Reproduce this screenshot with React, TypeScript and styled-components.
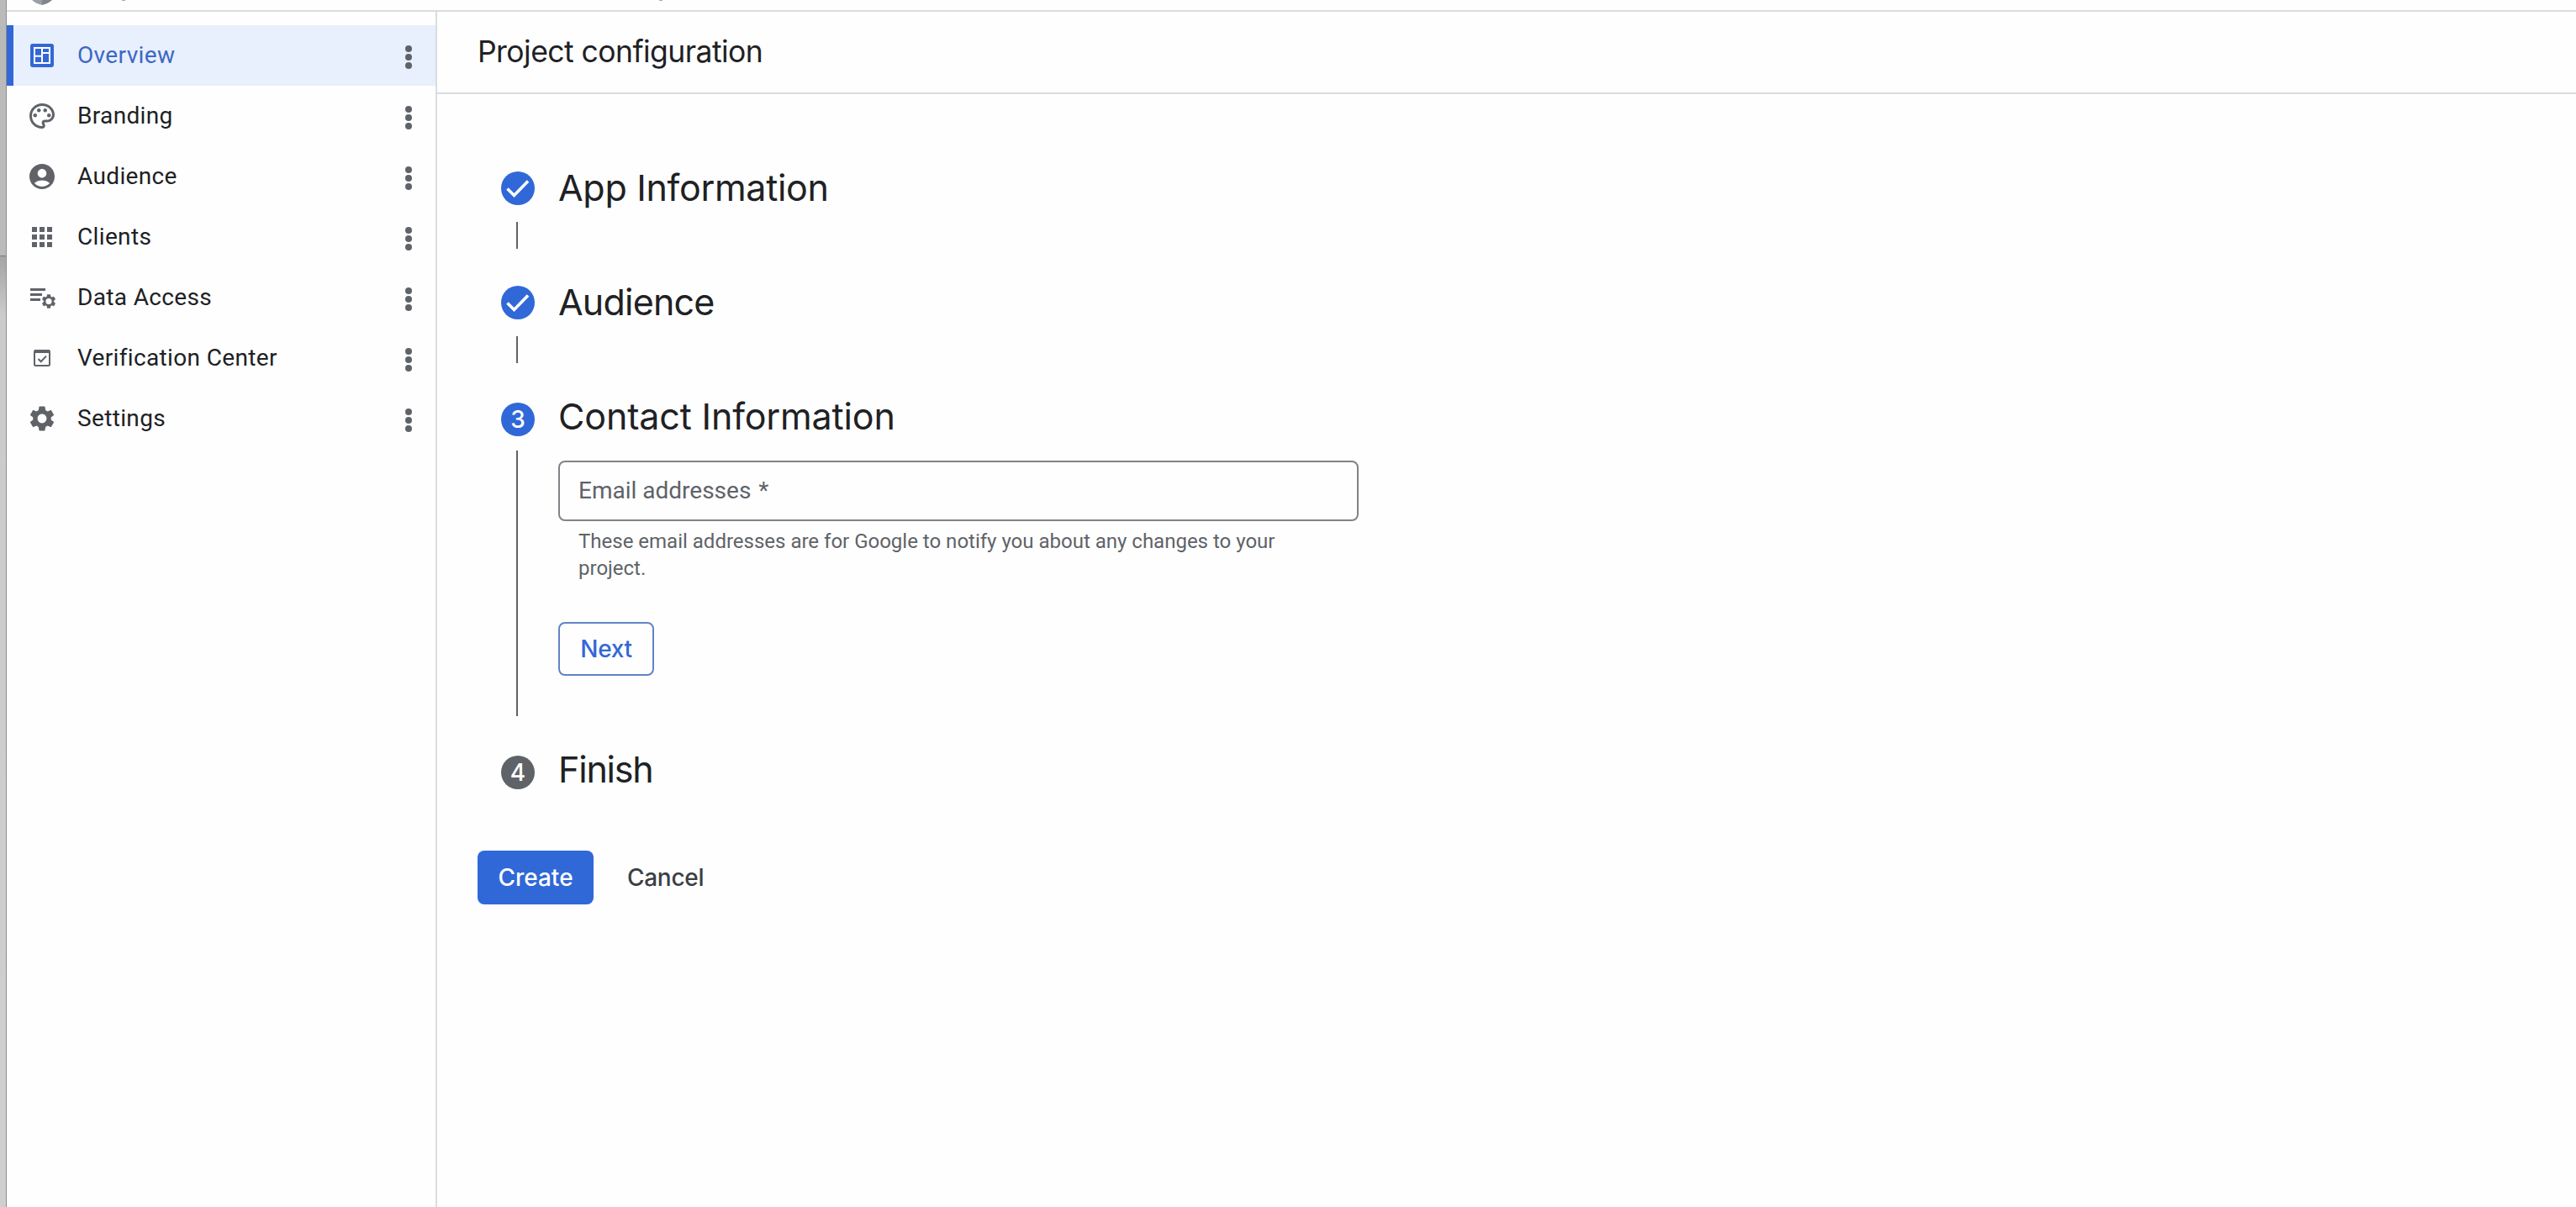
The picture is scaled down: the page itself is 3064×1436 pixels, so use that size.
import React from 'react';
import styled, { createGlobalStyle } from 'styled-components';
import {
    MdAccountCircle,
    MdApps,
    MdOutlinePalette,
    MdSettings,
} from 'react-icons/md';

const GlobalStyle = createGlobalStyle`
    * {
        box-sizing: border-box;
    }
    body {
        margin: 0;
        background: #fff;
        font-family: Roboto, sans-serif;
        color: #202124;
    }
`;

const brandFont = 'Inter, sans-serif';

const Page = styled.div`
    display: flex;
    height: 1436px;
    overflow: hidden;
    background: #fefefe;
`;

const WindowEdge = styled.div`
    width: 8px;
    flex: none;
    display: flex;
    flex-direction: column;
    border-right: 1px solid #8e8e8e;
`;

const EdgeTop = styled.div`
    height: 305px;
    background: #bababa;
    border-bottom: 1px solid #7d7d7d;
`;

const EdgeBottom = styled.div`
    flex: 1;
    background: linear-gradient(#a4a4a4, #cbcbcb 70px, #cfcfcf);
`;

const Window = styled.div`
    flex: 1;
    display: flex;
    flex-direction: column;
`;

const TopBar = styled.div`
    height: 14px;
    flex: none;
    overflow: hidden;
    padding-left: 30px;
    border-bottom: 2px solid #dadce0;
    svg {
        display: block;
    }
`;

const Body = styled.div`
    flex: 1;
    display: flex;
`;

const Sidebar = styled.nav`
    width: 512px;
    flex: none;
    padding-top: 16px;
    border-right: 2px solid #dadce0;
`;

const NavItem = styled.div<{ $active?: boolean }>`
    height: 72px;
    display: flex;
    align-items: center;
    padding: 0 28px 0 16px;
    border-left: 8px solid ${p => (p.$active ? '#3367d6' : 'transparent')};
    background: ${p => (p.$active ? '#e8effd' : 'transparent')};
    color: ${p => (p.$active ? '#3b68c4' : '#202124')};
    > svg:first-child {
        flex: none;
        color: ${p => (p.$active ? '#3367d6' : '#5f6368')};
    }
`;

const NavLabel = styled.span`
    flex: 1;
    margin-left: 24px;
    padding-bottom: 2px;
    font-size: 28px;
    letter-spacing: 0.35px;
`;

const Dots = styled.div`
    display: flex;
    flex-direction: column;
    gap: 2px;
    padding-top: 4px;
    i {
        width: 8px;
        height: 8px;
        border-radius: 50%;
        background: #5f6368;
    }
`;

const Main = styled.main`
    flex: 1;
`;

const Header = styled.header`
    height: 98px;
    padding: 24px 48px 0;
    border-bottom: 2px solid #dadce0;
`;

const Title = styled.h1`
    margin: 0;
    font: 400 35.5px/48px ${brandFont};
    letter-spacing: -0.55px;
`;

const Content = styled.div`
    padding: 92px 48px 0;
`;

const Steps = styled.div`
    padding-left: 28px;
`;

const StepRow = styled.section`
    display: flex;
    gap: 28px;
`;

const Rail = styled.div`
    width: 40px;
    display: flex;
    flex-direction: column;
`;

const Badge = styled.div<{ $color: string; $shift?: boolean }>`
    width: 40px;
    height: 40px;
    flex: none;
    display: flex;
    align-items: center;
    justify-content: center;
    margin-top: ${p => (p.$shift ? 3 : 0)}px;
    border-radius: 50%;
    background: ${p => p.$color};
    color: #fff;
    font: 500 28px/40px ${brandFont};
`;

const Connector = styled.div<{ $gap: number }>`
    flex: 1;
    width: 2px;
    margin: ${p => p.$gap}px 0 44px 18px;
    background: #5f6368;
`;

const StepBody = styled.div<{ $height: number }>`
    width: 952px;
    height: ${p => p.$height}px;
`;

const StepTitle = styled.h2<{ $tracking: number }>`
    margin: -7px 0 0;
    font: 400 43px/52px ${brandFont};
    letter-spacing: ${p => p.$tracking}px;
`;

const Field = styled.div`
    height: 72px;
    margin-top: 27px;
    padding: 0 22px;
    border: 2px solid #808388;
    border-radius: 8px;
    color: #5f6368;
    font-size: 28px;
    line-height: 68px;
    span {
        margin-left: 2px;
    }
`;

const Hint = styled.p`
    margin: 8px 24px 0;
    width: 850px;
    color: #5f6368;
    font-size: 24px;
    line-height: 32px;
`;

const Button = styled.button<{ $kind: 'outline' | 'filled' | 'text' }>`
    height: 64px;
    padding: 0 22px;
    border-radius: 8px;
    border: 2px solid ${p => (p.$kind === 'outline' ? '#6084c6' : 'transparent')};
    background: ${p => (p.$kind === 'filled' ? '#3068d8' : 'transparent')};
    background-clip: border-box;
    background-origin: border-box;
    color: ${p => (p.$kind === 'filled' ? '#fff' : p.$kind === 'outline' ? '#3367d6' : '#3c4043')};
    font: 500 28px/60px ${brandFont};
    letter-spacing: -0.3px;
`;

const NextButton = styled(Button)`
    display: block;
    width: 114px;
    margin-top: 48px;
`;

const CreateButton = styled(Button)`
    width: 138px;
    padding: 0;
    letter-spacing: 0;
`;

const Actions = styled.div`
    display: flex;
    gap: 16px;
    margin-top: 64px;
`;

const OverviewIcon = () => (
    <svg width="36" height="36" viewBox="0 0 36 36">
        <rect x="4" y="4" width="28" height="28" rx="3" fill="currentColor" />
        <path d="M9 9h18v18H9z M18 9v18 M9 18.8h9 M18 15h9" fill="none" stroke="#fff" strokeWidth="2" />
    </svg>
);

const DataAccessIcon = () => (
    <svg width="36" height="36" viewBox="0 0 36 36" fill="currentColor">
        <path d="M4 7h18v3H4z M4 13h14v3H4z M4 19h12v3H4z" />
        <svg x="17.5" y="14" width="17" height="17" viewBox="2 2 20 20">
            <MdSettings size={24} />
            <circle cx="12" cy="12" r="4.2" fill="#fefefe" />
        </svg>
    </svg>
);

const VerificationIcon = () => (
    <svg width="36" height="36" viewBox="0 0 36 36" fill="none" stroke="currentColor">
        <rect x="9" y="9" width="18" height="18" rx="1.5" strokeWidth="2" />
        <path d="M9 10h18" strokeWidth="4" />
        <path d="M13.5 19l3.2 3.2 6.3-6.6" strokeWidth="2" />
    </svg>
);

const DoneIcon = () => (
    <svg width="40" height="40" viewBox="0 0 40 40" fill="none" stroke="currentColor">
        <path d="M7.5 20.5l8 8L32 11.5" strokeWidth="3.6" />
    </svg>
);

const navItems = [
    { label: 'Overview', icon: <OverviewIcon />, active: true },
    { label: 'Branding', icon: <MdOutlinePalette size={36} /> },
    { label: 'Audience', icon: <MdAccountCircle size={36} /> },
    { label: 'Clients', icon: <MdApps size={36} /> },
    { label: 'Data Access', icon: <DataAccessIcon /> },
    { label: 'Verification Center', icon: <VerificationIcon /> },
    { label: 'Settings', icon: <MdSettings size={36} /> },
];

interface StepProps {
    title: string;
    badge: React.ReactNode;
    height: number;
    tracking: number;
    pending?: boolean;
    numbered?: boolean;
    last?: boolean;
    children?: React.ReactNode;
}

const Step = ({ title, badge, height, tracking, pending, numbered, last, children }: StepProps) => (
    <StepRow>
        <Rail>
            <Badge $color={pending ? '#5f6368' : '#3068d8'} $shift={numbered}>{badge}</Badge>
            {!last && <Connector $gap={numbered ? 17 : 20} />}
        </Rail>
        <StepBody $height={height}>
            <StepTitle $tracking={tracking}>{title}</StepTitle>
            {children}
        </StepBody>
    </StepRow>
);

const App = () => {
    return (
        <Page>
            <GlobalStyle />
            <WindowEdge>
                <EdgeTop />
                <EdgeBottom />
            </WindowEdge>
            <Window>
                <TopBar>
                    {/* bottom tip of the product shield and the scrolled-off header */}
                    <svg width="760" height="6" viewBox="0 0 760 6">
                        <path d="M0 0h12v6C7 5 3 3 0 0z" fill="#9aa0a6" />
                        <path d="M24 0H12v6c5-1 9-3 12-6z" fill="#80868b" />
                        <path d="M107 0h4v1h-4z M746 0h4v1h-4z" fill="#a8aaad" />
                    </svg>
                </TopBar>
                <Body>
                    <Sidebar>
                        {navItems.map(item => (
                            <NavItem key={item.label} $active={item.active}>
                                {item.icon}
                                <NavLabel>{item.label}</NavLabel>
                                <Dots><i /><i /><i /></Dots>
                            </NavItem>
                        ))}
                    </Sidebar>
                    <Main>
                        <Header>
                            <Title>Project configuration</Title>
                        </Header>
                        <Content>
                            <Steps>
                                <Step title="App Information" badge={<DoneIcon />} height={136} tracking={-0.3} />
                                <Step title="Audience" badge={<DoneIcon />} height={136} tracking={-0.8} />
                                <Step title="Contact Information" badge="3" height={420} tracking={-0.15} numbered>
                                    <Field>Email addresses <span>*</span></Field>
                                    <Hint>
                                        These email addresses are for Google to notify you about any changes to your project.
                                    </Hint>
                                    <NextButton $kind="outline">Next</NextButton>
                                </Step>
                                <Step title="Finish" badge="4" height={52} tracking={-1.2} numbered pending last />
                            </Steps>
                            <Actions>
                                <CreateButton $kind="filled">Create</CreateButton>
                                <Button $kind="text">Cancel</Button>
                            </Actions>
                        </Content>
                    </Main>
                </Body>
            </Window>
        </Page>
    );
};

export default App;
